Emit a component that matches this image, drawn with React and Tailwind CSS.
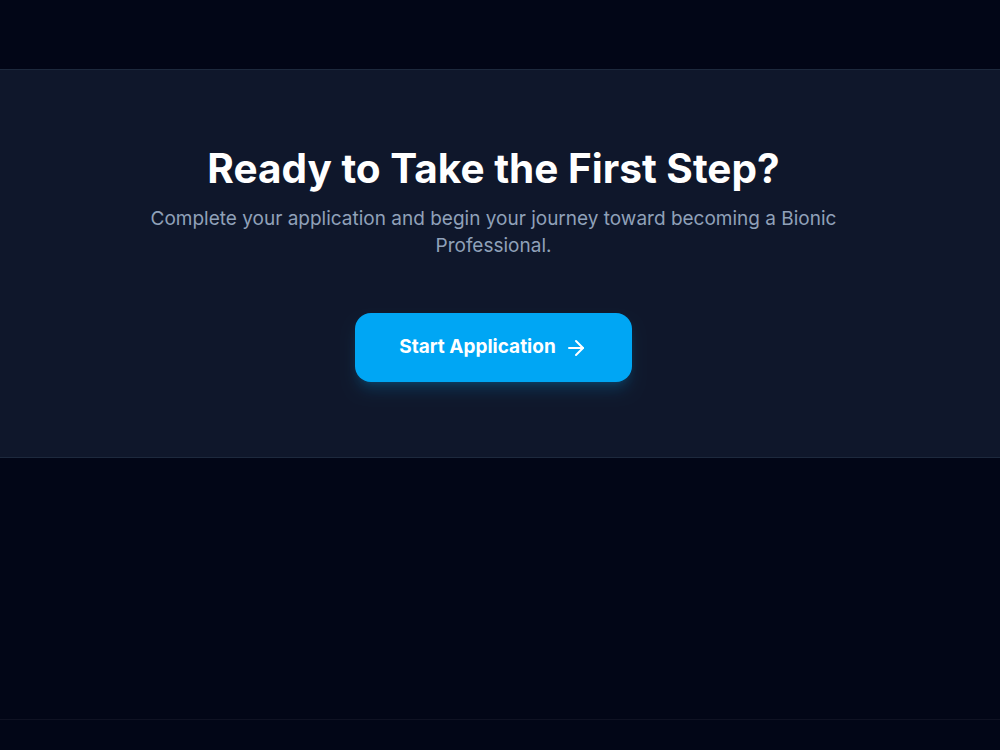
import { ArrowRight } from "lucide-react";

export default function App() {
    return (
        <div
            className="min-h-screen bg-[#020617] text-white"
            style={{ fontFamily: "Inter, 'Noto Sans', sans-serif" }}
        >
            {/* Spacer above */}
            <div className="h-[69px]" />

            {/* CTA */}
            <section className="border-y border-slate-800 bg-slate-900 pl-6 pr-[37px] pt-[75px] pb-[75px]">
                <div className="mx-auto max-w-3xl text-center">
                    <h2 className="text-[40.5px] leading-[48px] font-bold">
                        Ready to Take the First Step?
                    </h2>
                    <p className="mt-3 text-[19px] leading-[27px] text-slate-400">
                        Complete your application and begin your journey toward becoming a Bionic Professional.
                    </p>
                    <div className="mt-[54px] flex justify-center">
                        <button className="flex h-[69px] items-center gap-2 rounded-2xl bg-sky-500 px-11 text-[19px] font-bold text-white shadow-lg shadow-sky-500/20">
                            Start Application
                            <ArrowRight className="h-6 w-6" />
                        </button>
                    </div>
                </div>
            </section>

            <div className="h-[261px]" />

            <footer className="h-[30px] border-t border-white/5" />
        </div>
    );
}
